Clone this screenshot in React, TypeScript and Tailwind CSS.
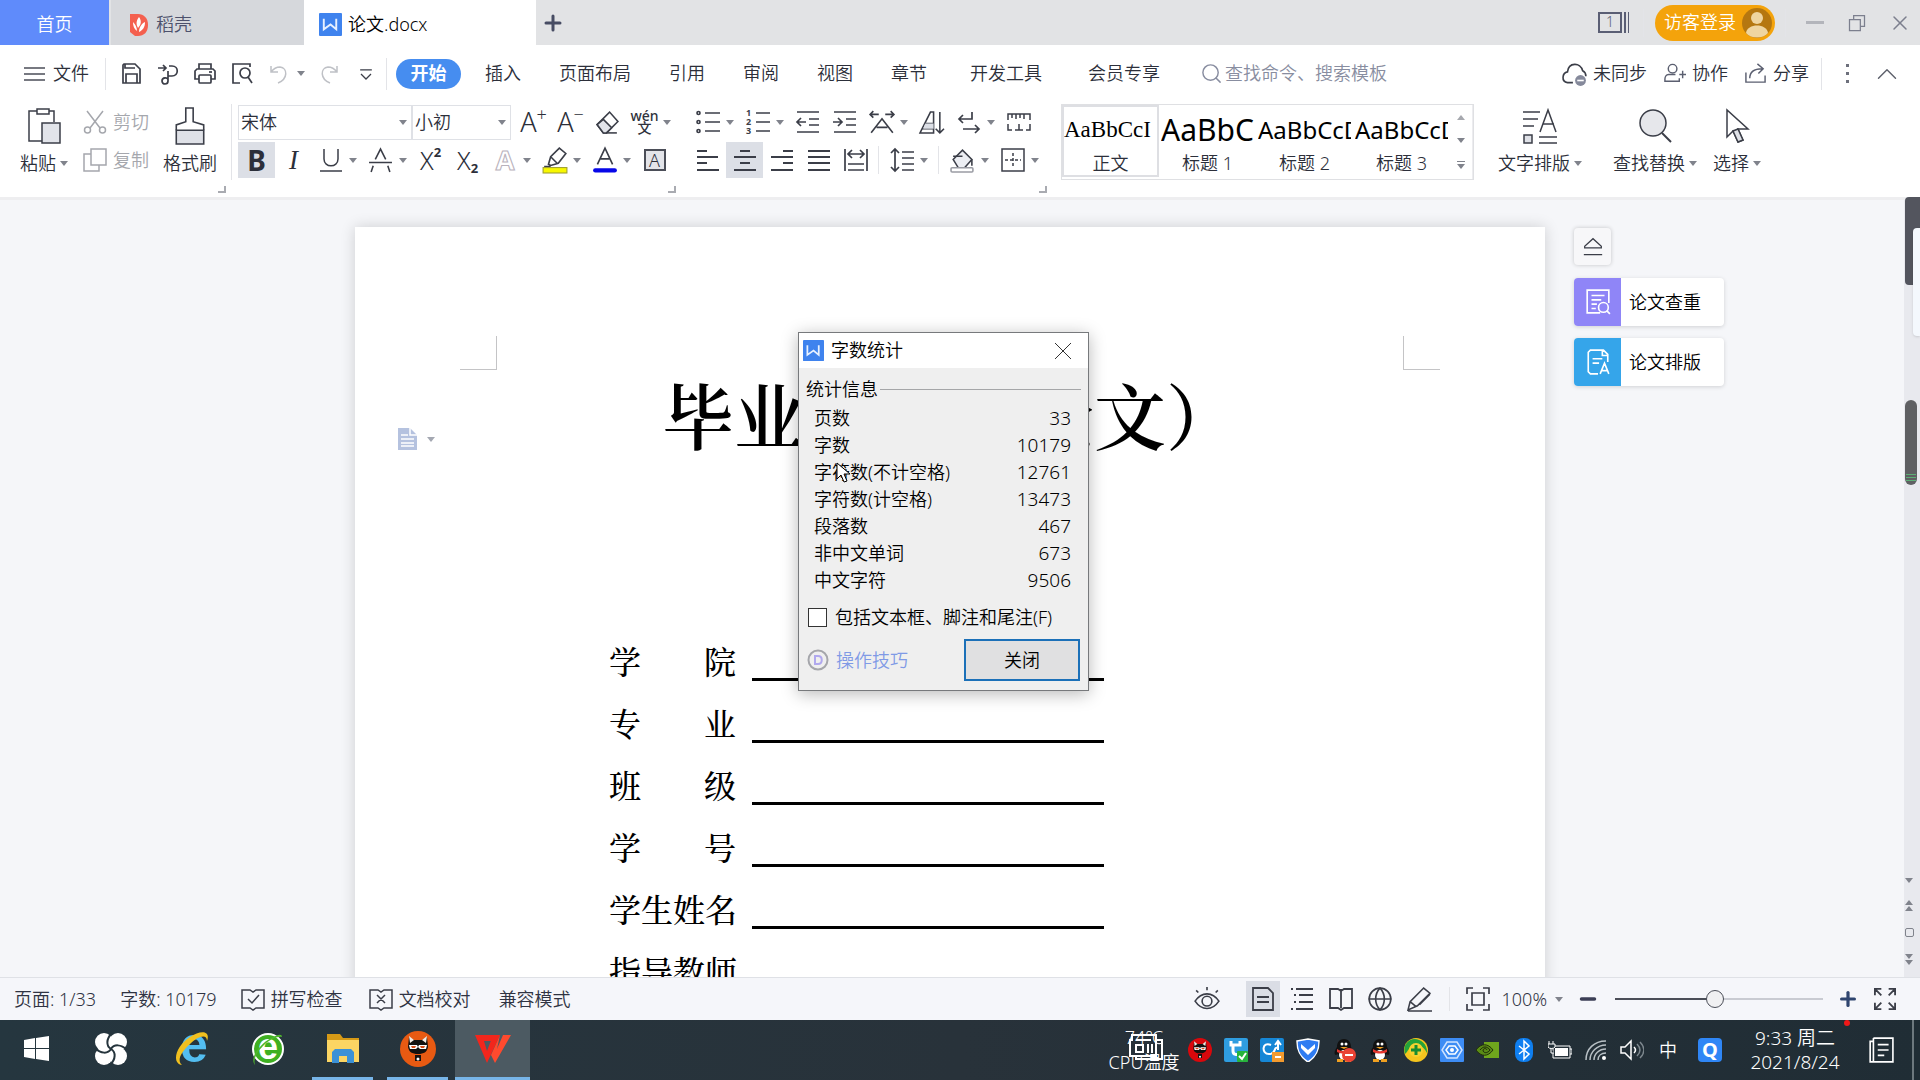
import React from 'react';
import { Globe, Search, X, Plus, Minus, ChevronUp } from 'lucide-react';

interface IconProps {
  size?: number;
  w?: number;
  className?: string;
  box?: string;
  children: React.ReactNode;
}

// Line icon on a 24px grid
function Icon({ size = 24, w = 1.5, className = 'text-[#3b3e48]', box = '0 0 24 24', children }: IconProps) {
  return (
    <svg width={size} height={size} viewBox={box} fill="none" stroke="currentColor" strokeWidth={w} className={`shrink-0 overflow-visible ${className}`} aria-hidden="true">
      {children}
    </svg>
  );
}

function Caret({ className = 'text-[#80838c]' }: { className?: string }) {
  return (
    <svg width="8" height="5" viewBox="0 0 8 5" className={`shrink-0 ${className}`} aria-hidden="true">
      <path d="M0 0h8L4 5z" fill="currentColor" />
    </svg>
  );
}

function Tool({ label, active, caret, children }: { label: string; active?: boolean; caret?: boolean; children: React.ReactNode }) {
  return (
    <>
      <button aria-label={label} className={`w-[37px] h-9 shrink-0 flex items-center justify-center ${active ? 'bg-[#dcdfe6]' : ''}`}>
        {children}
      </button>
      {caret && (
        <button aria-label={`${label}选项`} className="w-[13px] h-9 shrink-0 flex items-center">
          <Caret />
        </button>
      )}
    </>
  );
}

function Launcher() {
  return <button aria-label="更多设置" className="block w-2 h-[7px] mt-2 ml-auto border-r-2 border-b-2 border-[#a9abb1]" />;
}

function Divider({ className = 'h-8' }: { className?: string }) {
  return <div className={`w-px shrink-0 bg-[#e3e4e8] ${className}`} />;
}

const MENUS = ['插入', '页面布局', '引用', '审阅', '视图', '章节'];
const WIDE_MENUS = ['开发工具', '会员专享'];

const STYLES = [
  { name: '正文', sample: 'AaBbCcI', font: "font-['Liberation_Serif',serif] text-[23px]" },
  { name: '标题 1', sample: 'AaBbC', font: 'text-[30px] font-normal' },
  { name: '标题 2', sample: 'AaBbCcD', font: 'text-[24px] font-normal' },
  { name: '标题 3', sample: 'AaBbCcD', font: 'text-[24px] font-normal' },
];

const STATS = [
  ['页数', '33'],
  ['字数', '10179'],
  ['字符数(不计空格)', '12761'],
  ['字符数(计空格)', '13473'],
  ['段落数', '467'],
  ['非中文单词', '673'],
  ['中文字符', '9506'],
];

const FIELDS = ['学院', '专业', '班级', '学号', '学生姓名', '指导教师'];

function WpsDocIcon({ size }: { size: number }) {
  return (
    <svg width={size} height={size} viewBox="0 0 24 24" className="shrink-0" aria-hidden="true">
      <rect width="24" height="24" rx="1" fill="#3f83ee" />
      <path d="M5 6v11l7-5 6 5V6" fill="none" stroke="#e8f1ff" strokeWidth="2" />
    </svg>
  );
}

function TitleBar() {
  return (
    <div className="h-[45px] flex items-stretch bg-[#e2e3e5]">
      <button className="w-[109px] pt-1 bg-[#5f8bfb] text-white">首页</button>
      <button className="ml-0.5 w-[193px] pt-1 pl-[19px] flex items-center gap-2 bg-[#d6d8dc] text-[#4d516c]">
        <svg width="18" height="24" viewBox="0 0 18 24" aria-hidden="true">
          <path d="M0 1h8c6 0 10 4 10 11s-4 11-10 11H5L0 19z" fill="#f4604f" />
          <path d="M9 4c3 4 2 8-1 11C6 11 6 8 9 4zM3 9c2 2 4 5 4 9C4 16 3 13 3 9zM15 9c0 5-2 8-6 10 0-4 2-8 6-10z" fill="#fff" />
        </svg>
        稻壳
      </button>
      <button className="w-[232px] pt-1 pl-[15px] flex items-center gap-1.5 bg-white text-black">
        <WpsDocIcon size={23} />
        论文.docx
      </button>
      <button aria-label="新建" className="w-[34px] flex items-center justify-center text-[#474c63]">
        <Plus size={24} strokeWidth={3} />
      </button>
      <div className="ml-auto flex items-center">
        <button aria-label="窗口列表" className="flex gap-0.5 text-[#5a5e74]">
          <span className="w-6 h-[21px] border-2 border-current text-sm leading-4">1</span>
          <span className="w-[2px] h-[21px] bg-current" />
          <span className="w-px h-[21px] bg-current" />
        </button>
        <Divider className="ml-3.5 h-7" />
        <button className="ml-[11px] h-9 pl-[9px] pr-[3px] flex items-center gap-1.5 rounded-full bg-[#f4a30b] text-white">
          访客登录
          <svg width="30" height="30" viewBox="0 0 30 30" aria-hidden="true">
            <circle cx="15" cy="15" r="15" fill="#b57710" />
            <circle cx="15" cy="10" r="6" fill="#efd5a0" />
            <path d="M4 25c1-10 21-10 22 0-5 6-17 6-22 0z" fill="#efd5a0" />
          </svg>
        </button>
        <Divider className="ml-2.5 h-7" />
        <button aria-label="最小化" className="ml-5 w-[18px] h-[3px] bg-[#b3b5bb]" />
        <button aria-label="还原" className="ml-[23px]">
          <Icon size={20} className="text-[#7c7f8e]"><path d="M3 8h13v13H3zM8 8V3h13v13h-5" /></Icon>
        </button>
        <button aria-label="关闭" className="ml-[21px] mr-2 text-[#7c7f8e]">
          <X size={24} strokeWidth={1.5} />
        </button>
      </div>
    </div>
  );
}

function MenuBar() {
  return (
    <div className="h-[57px] flex items-center text-[#2c2f3a]">
      <button className="ml-6 flex items-center gap-2">
        <svg width="21" height="14" viewBox="0 0 21 14" stroke="#4b4e58" strokeWidth="1.5" aria-hidden="true">
          <path d="M0 1h21M0 7h21M0 13h21" />
        </svg>
        文件
      </button>
      <Divider className="ml-4 mr-1.5 h-8" />
      <Tool label="保存">
        <Icon w={1.7}><path d="M5 2h11l5 5v14H4V3z" /><path d="M6 2v4h10M7 21v-9h11v9" /></Icon>
      </Tool>
      <Tool label="输出为PDF">
        <Icon w={1.7}><path d="M2 6h8M7 3l3 3-3 3" /><path d="M13 4h3c7 0 7 10 0 10h-4V9M12 14v5c0 4-6 4-6 0s6-4 6-1" /></Icon>
      </Tool>
      <Tool label="打印">
        <Icon w={1.7}><path d="M6 7V2h12v5M6 17H2V9l2-2h16l2 2v8h-4" /><rect x="6" y="13" width="12" height="8" rx="1" /><path d="M16 10h3" /></Icon>
      </Tool>
      <Tool label="打印预览">
        <Icon w={1.7}><path d="M10 21H3V2h17v3" /><circle cx="15" cy="11" r="5" /><path d="M18 15l4 6" /></Icon>
      </Tool>
      <Tool label="撤销" caret>
        <Icon className="text-[#bfc1c6]"><path d="M4 4v6h7M4 10c3-4 6-5 9-5 8 1 8 12-2 16" /></Icon>
      </Tool>
      <Tool label="恢复">
        <Icon className="text-[#bfc1c6]"><path d="M20 4v6h-7M20 10c-3-4-6-5-9-5-8 1-8 12 2 16" /></Icon>
      </Tool>
      <Tool label="自定义快速访问工具栏">
        <Icon size={20}><path d="M5 7h14M6 12l6 6 6-6" /></Icon>
      </Tool>
      <Divider className="ml-0.5 h-8" />
      <button className="ml-[9px] mr-[5px] w-[65px] h-[30px] rounded-full bg-[#468df0] text-white font-bold">开始</button>
      {MENUS.map((menu) => (
        <button key={menu} className="px-[19px] shrink-0">{menu}</button>
      ))}
      {WIDE_MENUS.map((menu) => (
        <button key={menu} className="pl-6 pr-[22px] shrink-0">{menu}</button>
      ))}
      <label className="ml-[18px] flex items-center gap-0.5 text-[#888da0]">
        <Search size={23} strokeWidth={1.5} />
        <input aria-label="查找命令" placeholder="查找命令、搜索模板" className="w-44 bg-transparent outline-none placeholder:text-[#888da0]" />
      </label>
      <div className="ml-auto flex items-center shrink-0">
        <button className="flex items-center gap-1.5">
          <Icon size={26}>
            <path d="M11 20H6c-6-1-5-9 0-10 1-9 12-9 14-1 2 1 3 3 3 5" />
            <circle cx="18" cy="18" r="5" fill="#85899b" stroke="none" /><path d="M15 18h6" stroke="#fff" />
          </Icon>
          未同步
        </button>
        <button className="ml-4 flex items-center gap-1.5">
          <Icon size={23} className="text-[#5b5f70]"><circle cx="10" cy="7" r="4.500" /><path d="M13 13H6c-3 0-4 3-4 5v2h15v-3M17 13h7M20.500 9v8" /></Icon>
          协作
        </button>
        <button className="ml-4 flex items-center gap-1.5">
          <Icon size={23} className="text-[#5b5f70]"><path d="M2 11v10h20v-7" /><path d="M6 17c0-8 6-10 13-10M14 2l6 5-5 5" /></Icon>
          分享
        </button>
        <Divider className="ml-3 h-8" />
        <button aria-label="更多" className="ml-6 flex flex-col gap-[5px]">
          <span className="size-[3px] bg-[#6d707c]" />
          <span className="size-[3px] bg-[#6d707c]" />
          <span className="size-[3px] bg-[#6d707c]" />
        </button>
        <button aria-label="收起功能区" className="ml-[21px] mr-4 text-[#5e616c]">
          <ChevronUp size={34} strokeWidth={1} />
        </button>
      </div>
    </div>
  );
}

function BigButton({ label, caret, width, children }: { label: string; caret?: boolean; width: string; children: React.ReactNode }) {
  return (
    <button className={`${width} shrink-0 pt-1 flex flex-col items-center`}>
      <span className="h-9 flex items-center">{children}</span>
      <span className="mt-1.5 h-[26px] flex items-center gap-1 whitespace-nowrap">
        {label}
        {caret && <Caret />}
      </span>
    </button>
  );
}

function ClipboardGroup() {
  return (
    <div className="ml-2.5 w-[216px] shrink-0">
      <div className="flex">
        <BigButton label="粘贴" caret width="w-[68px]">
          <Icon size={36} box="0 0 36 36">
            <path d="M11 3H3v30h13M23 3h5v11M11 1h12v5H11z" />
            <path d="M16 15h18v20H16z" fill="#e2e4ea" />
          </Icon>
        </BigButton>
        <div className="w-[76px] pl-[5px] text-[#a5a7ad]">
          <button className="h-9 flex items-center gap-1.5">
            <Icon className="text-[#a5a7ad]"><path d="M4 1l13 17M20 1L7 18" /><circle cx="4.500" cy="20" r="3" /><circle cx="19.500" cy="20" r="3" /></Icon>
            剪切
          </button>
          <button className="mt-0.5 h-9 flex items-center gap-1.5">
            <Icon className="text-[#a5a7ad]"><path d="M8 1h15v16H8z" /><path d="M8 6H1v17h15v-6" /></Icon>
            复制
          </button>
        </div>
        <BigButton label="格式刷" width="w-[72px]">
          <Icon size={38} box="0 0 36 36">
            <path d="M5 22h26v13H5z" fill="#dfe1e7" />
            <path d="M5 22v-5l9-3V1h7v13l10 3v5" />
          </Icon>
        </BigButton>
      </div>
      <Launcher />
    </div>
  );
}

function FontSelect({ label, value, width }: { label: string; value: string; width: string }) {
  return (
    <div className={`${width} h-[35px] flex items-center border border-[#dfe1e6]`}>
      <select aria-label={label} className="w-full h-full pl-0.5 appearance-none bg-transparent outline-none">
        <option>{value}</option>
      </select>
      <Caret className="-ml-3 mr-1 text-[#80838c] pointer-events-none" />
    </div>
  );
}

function FontGroup() {
  return (
    <div className="ml-1.5 w-[438px] shrink-0">
      <div className="h-9 flex items-center">
        <FontSelect label="字体" value="宋体" width="w-[174px]" />
        <FontSelect label="字号" value="小初" width="w-[99px]" />
        <div className="ml-1 flex">
          <Tool label="增大字号"><span className="text-[27px] leading-8 font-light">A</span><sup className="-top-2 text-lg">+</sup></Tool>
          <Tool label="减小字号"><span className="text-[27px] leading-8 font-light">A</span><sup className="-top-2 text-lg">−</sup></Tool>
          <Tool label="清除格式">
            <Icon size={25}><path d="M2 14L14 2l8 9-11 11H8z" /><path d="M8 9l8 8-5 5H8l-6-8z" fill="#e2e4ea" /><path d="M11 22h10" /></Icon>
          </Tool>
          <Tool label="拼音指南" caret>
            <span className="flex flex-col items-center text-[#2f323c]">
              <span className="text-sm leading-3 font-medium">wén</span>
              <span className="text-sm leading-3 font-medium">文</span>
            </span>
          </Tool>
        </div>
      </div>
      <div className="mt-0.5 flex">
        <Tool label="加粗" active><span className="text-[28px] leading-8 font-bold">B</span></Tool>
        <Tool label="倾斜"><span className="text-[27px] leading-8 italic font-['Liberation_Serif',serif]">I</span></Tool>
        <Tool label="下划线" caret>
          <Icon><path d="M5 1v10c0 9 14 9 14 0V1M1 23h22" /></Icon>
        </Tool>
        <Tool label="删除线" caret>
          <Icon size={25}><path d="M7 11l5-10 5 10M1 14h22M5 17l-2 6M19 17l2 6" /></Icon>
        </Tool>
        <Tool label="上标"><span className="text-[25px] leading-8 font-light">X</span><sup className="-top-2 text-[13px] font-bold">2</sup></Tool>
        <Tool label="下标"><span className="text-[25px] leading-8 font-light">X</span><sub className="-bottom-2 text-[13px] font-bold">2</sub></Tool>
        <Tool label="文字效果" caret>
          <Icon size={26} className="text-[#b9b2bc]">
            <text x="12" y="21" textAnchor="middle" fontSize="25" fontWeight="bold" fontFamily="Noto Sans" fill="#fff" strokeWidth="1">A</text>
          </Icon>
        </Tool>
        <Tool label="突出显示" caret>
          <Icon size={26}><path d="M6 16l2-7 8-8 6 5-7 9-7 2zM8 9l6 6M2 18h6" /><rect x="1" y="19" width="22" height="5" fill="#f8f800" stroke="#a0a030" strokeWidth="1" /></Icon>
        </Tool>
        <Tool label="字体颜色" caret>
          <Icon size={26}><path d="M5 16L12 1l7 15M8 11h8" /><path d="M3 21.500h18" stroke="#0707e8" strokeWidth="4" strokeLinecap="round" /></Icon>
        </Tool>
        <Tool label="字符底纹">
          <span className="w-[22px] h-[22px] border-2 border-[#4b4e58] bg-[#e3e4e9] text-[18px] leading-[18px]">A</span>
        </Tool>
      </div>
      <Launcher />
    </div>
  );
}

function ParagraphGroup() {
  return (
    <div className="ml-[13px] w-[358px] shrink-0">
      <div className="h-9 flex">
        <Tool label="项目符号" caret>
          <Icon w={1.7}><circle cx="2.500" cy="3" r="1.500" /><circle cx="2.500" cy="12" r="1.500" /><circle cx="2.500" cy="21" r="1.500" /><path d="M9 3h15M9 12h15M9 21h15" /></Icon>
        </Tool>
        <Tool label="编号" caret>
          <Icon w={1.7}>
            <path d="M10 3h14M10 12h14M10 21h14" />
            <g fill="currentColor" stroke="none" fontSize="9" fontWeight="bold" fontFamily="Noto Sans"><text x="0" y="6">1</text><text x="0" y="15">2</text><text x="0" y="24">3</text></g>
          </Icon>
        </Tool>
        <Tool label="减少缩进">
          <Icon w={1.7}><path d="M1 2h22M13 9h10M13 15h10M1 22h22M1 12h9M5 8l-4 4 4 4" /></Icon>
        </Tool>
        <Tool label="增加缩进">
          <Icon w={1.7}><path d="M1 2h22M13 9h10M13 15h10M1 22h22M0 12h9M5 8l4 4-4 4" /></Icon>
        </Tool>
        <Tool label="中文版式" caret>
          <Icon size={26}><path d="M1 5h8M15 5h8M4 2L1 5l3 3M20 2l3 3-3 3M2 22L12 9l10 13M7 17h10" /></Icon>
        </Tool>
        <Tool label="排序">
          <Icon size={25}><path d="M1 22L11 2h3v20zM6 13h8M3 18h11" /><path d="M6 13h8v5H4z" fill="#dcdfe6" stroke="none" /><path d="M20 2v20M16 18l4 4 4-4" /></Icon>
        </Tool>
        <Tool label="显示编辑标记" caret>
          <Icon w={1.7}><path d="M15 2v7H2M6 5L2 9l4 4M6 19h16M18 15l4 4-4 4" /></Icon>
        </Tool>
        <Tool label="制表位">
          <Icon><path d="M1 10V4h22v6M5 4v4M9 4v5M13 4v4M17 4v5M1 14v6h4M23 14v6h-4M8 20h8M12 14v6" /></Icon>
        </Tool>
      </div>
      <div className="mt-0.5 flex items-center">
        <Tool label="左对齐"><Icon w={1.8}><path d="M1 3h10M1 9h21M1 15h10M1 22h22" /></Icon></Tool>
        <Tool label="居中对齐" active><Icon w={1.8}><path d="M7 3h10M1 9h22M7 15h10M1 22h22" /></Icon></Tool>
        <Tool label="右对齐"><Icon w={1.8}><path d="M13 3h10M1 9h22M13 15h10M1 22h22" /></Icon></Tool>
        <Tool label="两端对齐"><Icon w={1.8}><path d="M1 3h22M1 9h22M1 15h22M1 22h22" /></Icon></Tool>
        <Tool label="分散对齐"><Icon w={1.7}><path d="M1 1v22M23 1v22M4 16h16M4 22h16M4 6h16M8 2L4 6l4 4M16 2l4 4-4 4" /></Icon></Tool>
        <Divider className="mx-1 h-7" />
        <Tool label="行距" caret><Icon w={1.7}><path d="M5 1v22M1 5l4-4 4 4M1 19l4 4 4-4M12 4h12M12 10h12M12 16h12M12 22h12" /></Icon></Tool>
        <Divider className="mx-[5px] h-7" />
        <Tool label="底纹颜色" caret>
          <Icon size={25}><path d="M3 11l9-9 9 9-7 8H8z" fill="#eceef3" /><path d="M3 8h9M21 11v6" /><rect x="1" y="19" width="21" height="4" rx="1" fill="#fff" stroke="#9a9ca4" /></Icon>
        </Tool>
        <Tool label="边框" caret><Icon><path d="M1 1h22v22H1z" /><path d="M12 5v15M4 12h16" strokeDasharray="3 2" /></Icon></Tool>
      </div>
      <Launcher />
    </div>
  );
}

function StyleGallery() {
  return (
    <div className="ml-3.5 h-[76px] shrink-0 flex border border-[#dfe0e3]">
      {STYLES.map((style, i) => (
        <button key={style.name} className={`w-[97px] h-[72px] flex flex-col items-center overflow-hidden border-2 ${i === 0 ? 'border-[#dedfe3]' : 'border-transparent'}`}>
          <span className={`${style.font} w-full h-11 leading-[46px] text-black text-left whitespace-nowrap overflow-hidden`}>{style.sample}</span>
          <span className="leading-6">{style.name}</span>
        </button>
      ))}
      <div className="w-[23px] flex flex-col items-center justify-between py-2.5 border-r border-[#ececef]">
        <Caret className="rotate-180 text-[#a6a8ae]" />
        <Caret />
        <div className="flex flex-col items-center gap-0.5">
          <span className="w-2 h-px bg-[#80838c]" />
          <Caret />
        </div>
      </div>
    </div>
  );
}

function Ribbon() {
  return (
    <div className="h-[95px] pt-0.5 flex text-[#2c2f3a] overflow-hidden">
      <ClipboardGroup />
      <Divider className="ml-[5px] h-[76px]" />
      <FontGroup />
      <ParagraphGroup />
      <StyleGallery />
      <div className="ml-[18px] flex">
        <BigButton label="文字排版" caret width="w-[96px]">
          <Icon size={36} box="0 0 36 36">
            <path d="M1 4h17M1 11h15M1 18h11M18 24L26 2l8 22M21 16h11M17 29h18M17 35h18" />
            <path d="M2 27h8v8H2z" fill="#dfe1e7" />
          </Icon>
        </BigButton>
        <div className="ml-[19px]">
          <BigButton label="查找替换" caret width="w-[96px]">
            <Icon size={36} box="0 0 36 36"><circle cx="16" cy="15" r="13" fill="#e6e7eb" /><path d="M25 25l9 9" strokeWidth="2" /></Icon>
          </BigButton>
        </div>
        <BigButton label="选择" caret width="w-[68px]">
          <Icon size={36} box="0 0 36 36"><path d="M8 2v27l6-6 5 11 5-2-5-11h10z" className="fill-white" /><path d="M14 23l5 11 5-2-5-11z" fill="#dfe1e7" /></Icon>
        </BigButton>
      </div>
    </div>
  );
}

function WordCountDialog() {
  return (
    <div role="dialog" aria-label="字数统计" className="absolute left-[798px] top-[132px] w-[291px] h-[359px] border border-[#77797c] bg-[#efefef] text-black shadow-[0_3px_16px_rgba(0,0,0,0.28)]">
      <div className="h-[35px] pl-1 pr-4 flex items-center bg-white">
        <WpsDocIcon size={21} />
        <span className="ml-[7px]">字数统计</span>
        <button aria-label="关闭对话框" className="ml-auto">
          <svg width="18" height="18" viewBox="0 0 18 18" stroke="#333" aria-hidden="true"><path d="M1 1l16 16M17 1L1 17" /></svg>
        </button>
      </div>
      <div className="mt-2 px-[7px] h-[27px] flex items-center gap-0.5">
        统计信息
        <span className="flex-1 h-px bg-[#a5a6a8]" />
      </div>
      <table className="mt-0.5 mx-[15px] w-[257px]">
        <tbody>
          {STATS.map(([name, value]) => (
            <tr key={name} className="h-[27px]">
              <th scope="row" className="p-0 leading-[27px] font-[350] text-left">{name}</th>
              <td className="p-0 leading-[27px] text-[19px] text-right">{value}</td>
            </tr>
          ))}
        </tbody>
      </table>
      <label className="mt-2.5 ml-[9px] flex items-center gap-2">
        <input type="checkbox" className="size-[19px] appearance-none border border-[#333] bg-white" />
        包括文本框、脚注和尾注(F)
      </label>
      <div className="mt-2 pl-2 pr-2 flex items-center">
        <a href="#tips" className="flex items-center gap-[7px] text-[#7f9ae6]">
          <svg width="22" height="22" viewBox="0 0 22 22" aria-hidden="true">
            <circle cx="11" cy="11" r="9.500" fill="none" stroke="#a5a6ab" strokeWidth="2" />
            <path d="M8 7h3c5 0 5 8 0 8H8z" fill="none" stroke="#b0a8ee" strokeWidth="2" />
          </svg>
          操作技巧
        </a>
        <button className="ml-auto w-[116px] h-[42px] border-2 border-[#1b70b8] bg-[#e0e0e1]">关闭</button>
      </div>
    </div>
  );
}

function DocumentPage() {
  return (
    <div className="relative mt-[27px] h-[1683px] pt-[109px] bg-white text-black shadow-[0_0_14px_rgba(0,0,0,0.16)] font-['Liberation_Serif','Noto_Serif_CJK_SC','Noto_Sans_CJK_SC',serif]">
      <div className="px-[105px] flex justify-between">
        <div className="w-[37px] h-[34px] border-r border-b border-[#c4c4c6]" />
        <div className="w-[37px] h-[34px] border-l border-b border-[#c4c4c6]" />
      </div>
      <button aria-label="页面选项" className="absolute left-[43px] top-[201px] flex items-center gap-2.5">
        <svg width="19" height="22" viewBox="0 0 19 22" aria-hidden="true">
          <path d="M0 0h12l7 7v15H0z" fill="#b5c2df" />
          <path d="M12 0v7h7M3 7h7M3 11h13M3 15h13M3 18h13" fill="none" stroke="#fff" strokeWidth="1.500" />
        </svg>
        <Caret className="text-[#a4a8b2]" />
      </button>
      <h1 className="pt-1 text-[72px] leading-[92px] font-semibold text-center whitespace-nowrap">毕业设计（论文）</h1>
      <div className="mt-[153px] ml-[254px]">
        {FIELDS.map((field) => (
          <div key={field} className="h-[62px] flex items-end">
            <div className="w-[127px] h-[38px] flex justify-between text-[32px] leading-10 font-medium">
              {field.split('').map((ch) => (
                <span key={ch}>{ch}</span>
              ))}
            </div>
            <div className="ml-4 w-[352px] h-[3px] bg-black" />
          </div>
        ))}
      </div>
    </div>
  );
}

function SidePanel() {
  return (
    <div className="pl-[29px] pt-7 text-black">
      <button aria-label="收起" className="size-[37px] flex items-center justify-center rounded-sm bg-[#f7f7f9] shadow-[0_0_4px_rgba(0,0,0,0.2)]">
        <Icon size={20}><path d="M2 13v-2l10-9 10 9v2zM1 21h22" /></Icon>
      </button>
      <button className="mt-[13px] w-[150px] h-12 flex items-center rounded overflow-hidden bg-white shadow-[0_1px_4px_rgba(0,0,0,0.15)]">
        <span className="w-[47px] h-12 flex items-center justify-center bg-[#8f85f7]">
          <Icon size={26} className="text-white"><path d="M14 22H2V1h20v12M6 6h12M6 10h9M6 14h5M6 18h4" /><circle cx="17" cy="17" r="4.500" /><path d="M20 20l3 3" /></Icon>
        </span>
        <span className="ml-2">论文查重</span>
      </button>
      <button className="mt-3 w-[150px] h-12 flex items-center rounded overflow-hidden bg-white shadow-[0_1px_4px_rgba(0,0,0,0.15)]">
        <span className="w-[47px] h-12 flex items-center justify-center bg-[#35a5ea]">
          <Icon size={26} className="text-white"><path d="M12 23H5l-2-2V3l2-2h12l4 4v7M16 1v5h5M7 9h9M7 13h6M14 23l4-10 4 10M15 20h6" /></Icon>
        </span>
        <span className="ml-2">论文排版</span>
      </button>
    </div>
  );
}

function ScrollBar() {
  return (
    <div className="relative w-4 shrink-0 flex flex-col items-center bg-[#e8e9ee]">
      <div className="absolute right-0 -top-[3px] w-[15px] h-[88px] rounded-l bg-[#53555e]" />
      <div className="absolute right-0 top-7 w-[7px] h-[108px] rounded-l bg-[#f4f8fd] shadow" />
      <div className="mt-[200px] mr-0.5 w-3 h-[85px] rounded-full overflow-hidden bg-[#5f6063] flex flex-col justify-end items-center gap-0.5 pb-1">
        <span className="w-2.5 h-px bg-[#5dae76]" />
        <span className="w-2.5 h-px bg-[#5dae76]" />
        <span className="w-2.5 h-px bg-[#5dae76]" />
      </div>
      <div className="mt-auto mb-3 mr-1.5 flex flex-col items-center gap-[17px]">
        <Caret />
        <span className="flex flex-col gap-px rotate-180"><Caret /><Caret /></span>
        <span className="size-[9px] rounded-xs border border-[#80838c]" />
        <span className="flex flex-col gap-px"><Caret /><Caret /></span>
      </div>
    </div>
  );
}

function StatusBar() {
  return (
    <div className="h-[43px] shrink-0 flex items-center border-t border-[#dfe1e6] bg-[#f5f6fa] text-[#2f3342]">
      <span className="ml-3.5">页面: 1/33</span>
      <span className="ml-6">字数: 10179</span>
      <button className="ml-6 flex items-center gap-1.5">
        <Icon><path d="M9 3H1v18h8l3 2 3-2h8V3h-8l-3 2zM7 12l4 4 7-8" /></Icon>
        拼写检查
      </button>
      <button className="ml-[26px] flex items-center gap-1.5">
        <Icon><path d="M9 3H1v18h8l3 2 3-2h8V3h-8l-3 2zM8 8l8 8M16 8l-8 8" /></Icon>
        文档校对
      </button>
      <span className="ml-7">兼容模式</span>
      <div className="ml-auto flex items-center">
        <button aria-label="护眼模式">
          <Icon size={26}><path d="M1 14c6-9 16-9 22 0-6 9-16 9-22 0zM12 1v3M2 4l2 2M22 4l-2 2" /><circle cx="12" cy="14" r="4.500" /></Icon>
        </button>
        <div className="ml-6 flex">
          <button aria-label="页面视图" className="w-[39px] h-9 flex items-center justify-center"><span className="w-[34px] h-9 flex items-center justify-center bg-[#dadde5]"><Icon w={1.8}><path d="M2 1h15l5 5v17H2zM6 10h12M6 15h12" /></Icon></span></button>
          <button aria-label="大纲" className="w-[39px] flex items-center justify-center"><Icon w={1.8}><path d="M1 2h2M6 2h17M4 8h2M9 8h14M4 15h2M9 15h14M1 22h2M6 22h17" /></Icon></button>
          <button aria-label="阅读版式" className="w-[39px] flex items-center justify-center"><Icon w={1.8}><path d="M12 2v19M9 2H1v19h8l3 2 3-2h8V2h-8l-3 2-3-2z" /></Icon></button>
          <button aria-label="Web版式" className="w-[39px] flex items-center justify-center text-[#3b3e48]"><Globe size={26} strokeWidth={1.5} /></button>
          <button aria-label="写作模式" className="w-[39px] flex items-center justify-center"><Icon size={25}><path d="M1 22l2-8L16 1l6 5L10 18zM3 14l6 5M12 17L22 7M1 23h23" /></Icon></button>
        </div>
        <Divider className="mx-2.5 h-6" />
        <button aria-label="最佳显示比例" className="ml-1.5"><Icon w={1.7}><path d="M1 7V1h6M17 1h6v6M23 17v6h-6M7 23H1v-6M6 6h12v12H6z" /></Icon></button>
        <button className="ml-3 flex items-center gap-2">100% <Caret /></button>
        <button aria-label="缩小" className="ml-3.5 text-[#3b3e55]"><Minus size={22} strokeWidth={4} /></button>
        <label className="ml-4 w-[208px] flex">
          <input
            type="range"
            aria-label="显示比例"
            min={0}
            max={100}
            defaultValue={48}
            className="w-full h-5 appearance-none bg-[linear-gradient(to_right,#4b4e58_48%,#c9cbd2_48%)] bg-[length:100%_2px] bg-center bg-no-repeat [&::-webkit-slider-thumb]:appearance-none [&::-webkit-slider-thumb]:size-[18px] [&::-webkit-slider-thumb]:rounded-full [&::-webkit-slider-thumb]:border [&::-webkit-slider-thumb]:border-[#4b4e58] [&::-webkit-slider-thumb]:bg-[#f0f0f2]"
          />
        </label>
        <button aria-label="放大" className="ml-3.5 text-[#2f456f]"><Plus size={22} strokeWidth={3.500} /></button>
        <button aria-label="全屏" className="ml-[15px] mr-6"><Icon size={22} w={2}><path d="M1 8V1h7M1 1l7 7M16 1h7v7M23 1l-7 7M1 16v7h7M1 23l7-7M23 16v7h-7M23 23l-7-7" /></Icon></button>
      </div>
    </div>
  );
}

function TaskButton({ label, running, active, width = 'w-[75px]', children }: { label: string; running?: boolean; active?: boolean; width?: string; children: React.ReactNode }) {
  return (
    <button aria-label={label} className={`${width} h-full flex flex-col items-center ${active ? 'bg-[#4c5a62]' : ''}`}>
      <span className="flex-1 flex items-center">{children}</span>
      <span className={`h-[3px] ${active ? 'w-full' : 'w-[61px]'} ${running ? 'bg-[#77b5e8]' : ''}`} />
    </button>
  );
}

function CatFace({ size, bg }: { size: number; bg: string }) {
  return (
    <svg width={size} height={size} viewBox="0 0 36 36" aria-hidden="true">
      <circle cx="18" cy="18" r="18" fill={bg} />
      <path d="M9 6l5 3h8l5-3 1 10c-1 5-4 7-10 7S9 21 8 16zM15 24h6v6h-6z" fill="#141210" />
      <path d="M9 5l5 4-4 3zM27 5l-5 4 4 3z" fill="#f4ece4" />
      <path d="M9 14h8l1 2 1-2h8l-1 4h-6l-2-2-2 2h-6z" fill="#fff" />
      <path d="M11 15h5l-1 2h-3zM20 15h5l-1 2h-3z" fill="#d8501c" />
      <circle cx="18" cy="28" r="1.500" fill="#fff" />
    </svg>
  );
}

function Penguin({ busy }: { busy?: boolean }) {
  return (
    <svg width="24" height="24" viewBox="0 0 24 24" aria-hidden="true">
      <path d="M12 1c5 0 7 4 7 8 3 5 3 8 1 8l-2-1-2 6H8l-2-6-2 1c-2 0-2-4 1-8 0-4 2-8 7-8z" fill="#111" />
      <ellipse cx="12" cy="17" rx="5" ry="5" fill="#fff" />
      <path d="M5 11c5 3 9 3 14 0v3c-5 2-9 2-14 0z" fill="#e3372f" />
      <circle cx="10" cy="6" r="1.500" fill="#fff" /><circle cx="14" cy="6" r="1.500" fill="#fff" />
      <path d="M8 9h8l-4 2zM5 21h6v3H5zM13 21h6v3h-6z" fill="#f0a020" />
      {busy && <><circle cx="17" cy="17" r="7" fill="#ea4335" /><path d="M13 17h8" stroke="#fff" strokeWidth="2" /></>}
    </svg>
  );
}

const TRAY = [
  { name: '鲁大师', icon: <CatFace size={24} bg="#d9080c" /> },
  {
    name: '同步助手',
    icon: <><rect width="24" height="24" rx="2" fill="#2f9de0" /><path d="M7 3v4h9V3M9 7v6c0 4 4 4 7 3" fill="none" stroke="#fff" strokeWidth="3" /><rect x="13" y="13" width="11" height="11" rx="1" fill="#27b33c" /><path d="M15 18l3 3 4-6" fill="none" stroke="#fff" strokeWidth="2" /></>,
  },
  {
    name: '传输',
    icon: <><rect width="24" height="24" rx="2" fill="#1687d6" /><path d="M11 7c-9-4-10 9-2 9s4-8 9-6M18 12V3M15 7l3-4 3 4" fill="none" stroke="#fff" strokeWidth="2" /><rect x="12" y="14" width="12" height="10" fill="#f29a2e" /><path d="M15 19h6" stroke="#fff" strokeWidth="2" /></>,
  },
  {
    name: '电脑管家',
    icon: <><path d="M1 3l11-2 11 2c0 10-3 16-11 21C4 19 1 13 1 3z" fill="#2f7cf2" stroke="#fff" strokeWidth="1.500" /><path d="M5 6l7 6 7-6v4l-7 7-7-7z" fill="#fff" /></>,
  },
  { name: 'QQ忙碌', icon: <Penguin busy /> },
  { name: 'QQ', icon: <Penguin /> },
  {
    name: '安全卫士',
    icon: <><circle cx="12" cy="12" r="12" fill="#f5c51d" /><path d="M2 6C8-4 24 2 23 15c-3-6-8-9-13-8S4 14 1 16C0 12 0 9 2 6z" fill="#25a33a" /><circle cx="12" cy="12" r="7" fill="#f7d130" /><path d="M12 7v10M7 12h10" stroke="#178c31" strokeWidth="3" /></>,
  },
  {
    name: '远程桌面',
    icon: <><rect width="24" height="24" rx="1" fill="#3d8cf4" /><path d="M7 4h10l5 8-5 8H7l-5-8z" fill="none" stroke="#cfe3ff" strokeWidth="1.500" /><path d="M9 8h6l3 4-3 4H9l-3-4z" fill="none" stroke="#fff" strokeWidth="1.500" /><circle cx="12" cy="12" r="2" fill="#fff" /></>,
  },
  {
    name: 'NVIDIA',
    icon: <><rect x="8" y="4" width="15" height="16" fill="#6fa61d" /><path d="M0 12c5-7 12-7 17 0-5 7-12 7-17 0z" fill="#5a8b16" stroke="#23310c" /><path d="M4 12c3-4 7-4 10 0-3 4-7 3-7 0 1-2 3-2 4 0" fill="none" stroke="#1d280a" /></>,
  },
  {
    name: '蓝牙',
    icon: <><rect x="3" y="0" width="18" height="24" rx="8" fill="#0f7ff0" /><path d="M7 8l10 8-5 5V3l5 5-10 8" fill="none" stroke="#fff" strokeWidth="1.500" /></>,
  },
  {
    name: '电源',
    icon: <><path d="M5 8h17v12H5zM22 11h2v5h-2" fill="none" stroke="#fff" /><path d="M7 10h13v8H7z" fill="#fff" /><path d="M1 3v3M5 3v3M0 6h7v3c-1 2-6 2-7 0zM3 10v5h3" fill="#25323a" stroke="#fff" /></>,
  },
  {
    name: '网络',
    icon: <><path d="M2 22C2 11 10 3 22 3M6 22c0-8 7-15 16-15M10 22c0-6 5-11 12-11M14 22c0-4 3-7 8-7" fill="none" stroke="#b8c0c5" strokeWidth="1.500" /><circle cx="20" cy="20" r="2" fill="#fff" /></>,
  },
  {
    name: '音量',
    icon: <><path d="M1 9h4l6-6v18l-6-6H1zM14 9c2 2 2 4 0 6" fill="none" stroke="#fff" strokeWidth="1.500" /><path d="M17 6c4 4 4 8 0 12M20 4c5 5 5 11 0 16" fill="none" stroke="#7d878d" strokeWidth="1.500" /></>,
  },
];

function TaskBar() {
  return (
    <div className="h-[60px] shrink-0 flex items-center bg-linear-to-r from-[#25363f] via-[#28323a] to-[#202d35] text-white">
      <TaskButton label="开始菜单" width="w-[73px]">
        <svg width="25" height="25" viewBox="0 0 25 25" fill="#fff" aria-hidden="true"><path d="M0 4l11-2v10H0zM12 2l13-2v12H12zM0 13h11v10L0 21zM12 13h13v12l-13-2z" /></svg>
      </TaskButton>
      <TaskButton label="应用中心">
        <svg width="34" height="34" viewBox="0 0 34 34" aria-hidden="true">
          <g fill="#fff">
            <circle cx="10" cy="10" r="9" />
            <circle cx="24" cy="10" r="9" />
            <circle cx="24" cy="24" r="9" />
            <circle cx="10" cy="24" r="9" />
          </g>
          <path d="M17 17c-5-3-5-10 1-16M17 17c3-5 10-5 16 1M17 17c5 3 5 10-1 16M17 17c-3 5-10 5-16-1" fill="none" stroke="#25343c" strokeWidth="2" />
        </svg>
      </TaskButton>
      <div className="ml-[7px] h-full flex">
        <TaskButton label="Internet Explorer">
          <svg width="36" height="36" viewBox="0 0 36 36" aria-hidden="true">
            <text x="19" y="31" textAnchor="middle" fontSize="50" fontWeight="bold" fontFamily="Liberation Sans" fill="#53bdf0">e</text>
            <path d="M7 34C-4 32 1 15 15 6 25-1 36-1 32 10c0-8-10-4-17 3C5 22 2 30 7 34z" fill="#f1c01f" />
          </svg>
        </TaskButton>
        <TaskButton label="360浏览器">
          <svg width="34" height="34" viewBox="0 0 34 34" aria-hidden="true">
            <circle cx="17" cy="17" r="15" fill="#3fb022" stroke="#fff" strokeWidth="2" />
            <text x="17" y="27" textAnchor="middle" fontSize="36" fontWeight="bold" fontFamily="Liberation Sans" fill="#fff">e</text>
            <path d="M4 33C-2 26 9 12 20 6c6-3 11-5 11-1-6-1-14 4-19 9C6 20 2 27 4 33z" fill="#50b82d" />
          </svg>
        </TaskButton>
        <TaskButton label="文件资源管理器" running>
          <svg width="34" height="30" viewBox="0 0 34 30" aria-hidden="true">
            <path d="M1 0h13l3 4h16v24H1z" fill="#d79a16" />
            <path d="M1 6h32v22H1z" fill="#fbd563" />
            <path d="M6 29V18l3-3h16l3 3v11h-7v-7h-8v7z" fill="#3b91d6" />
          </svg>
        </TaskButton>
        <TaskButton label="鲁大师" running><CatFace size={36} bg="#e85a12" /></TaskButton>
        <TaskButton label="WPS Office" running active>
          <svg width="36" height="30" viewBox="0 0 36 30" aria-hidden="true">
            <path d="M0 1h20l-2 6H9l3 10 6-16h7L12 29z" fill="#f2261c" />
            <path d="M25 1l-9 20 4 8L36 1h-8l-6 14z" fill="#ff4a2e" />
          </svg>
        </TaskButton>
      </div>
      <div className="ml-auto h-full flex items-center">
        <div className="relative w-[76px] text-center leading-[25px] whitespace-nowrap">
          <div>74℃</div>
          <div>CPU温度</div>
          <svg width="36" height="28" viewBox="0 0 36 28" className="absolute left-[22px] top-[9px]" fill="none" stroke="#fff" strokeWidth="2" aria-hidden="true">
            <path d="M4 1h24v21H2V6h2zM28 6h6v19H8v-3M8 6h15M8 11h7v7H8zM20 10v9M24 10v9" />
          </svg>
        </div>
        {TRAY.map((item) => (
          <button key={item.name} aria-label={item.name} className="w-9 flex justify-center">
            <svg width="24" height="24" viewBox="0 0 24 24" aria-hidden="true">{item.icon}</svg>
          </button>
        ))}
        <button className="w-9">中</button>
        <button aria-label="QQ浏览器" className="ml-1.5 w-9 flex justify-center">
          <span className="size-6 rounded-sm bg-[#2f86f6] font-bold text-xl leading-6">Q</span>
        </button>
        <div className="relative w-[134px] text-center text-[19px] leading-6">
          <div>9:33 周二</div>
          <div>2021/8/24</div>
          <span className="absolute right-3 -top-1.5 size-1.5 rounded-full bg-[#f01818]" />
        </div>
        <button aria-label="通知中心" className="w-[38px] flex justify-center">
          <Icon size={26} className="text-white"><path d="M5 1h18v22H2V4h3M5 1v22M9 7h10M9 12h10M9 17h6" /></Icon>
        </button>
        <button aria-label="显示桌面" className="ml-3 w-[8px] h-[60px] border-l-2 border-[#6d787e]" />
      </div>
    </div>
  );
}

export default function App() {
  return (
    <div className="h-screen flex flex-col overflow-hidden bg-white text-[18px] leading-[27px] font-[350] font-['Noto_Sans','Noto_Sans_CJK_SC',sans-serif]">
      <TitleBar />
      <MenuBar />
      <Ribbon />
      <div className="h-[3px] shrink-0 bg-[#eeeef0]" />
      <main className="relative flex-1 min-h-0 flex bg-[#f5f6f9]">
        <div className="flex-1 min-w-0 mr-1 grid grid-cols-[1fr_1190px_1fr] overflow-hidden">
          <div />
          <DocumentPage />
          <SidePanel />
        </div>
        <ScrollBar />
        <WordCountDialog />
        <svg width="16" height="22" viewBox="0 0 16 22" className="absolute left-[836px] top-[262px]" aria-hidden="true">
          <path d="M1 1v16l4-4 3 7 3-1-3-7h6z" fill="#fff" stroke="#000" />
        </svg>
      </main>
      <StatusBar />
      <TaskBar />
    </div>
  );
}
